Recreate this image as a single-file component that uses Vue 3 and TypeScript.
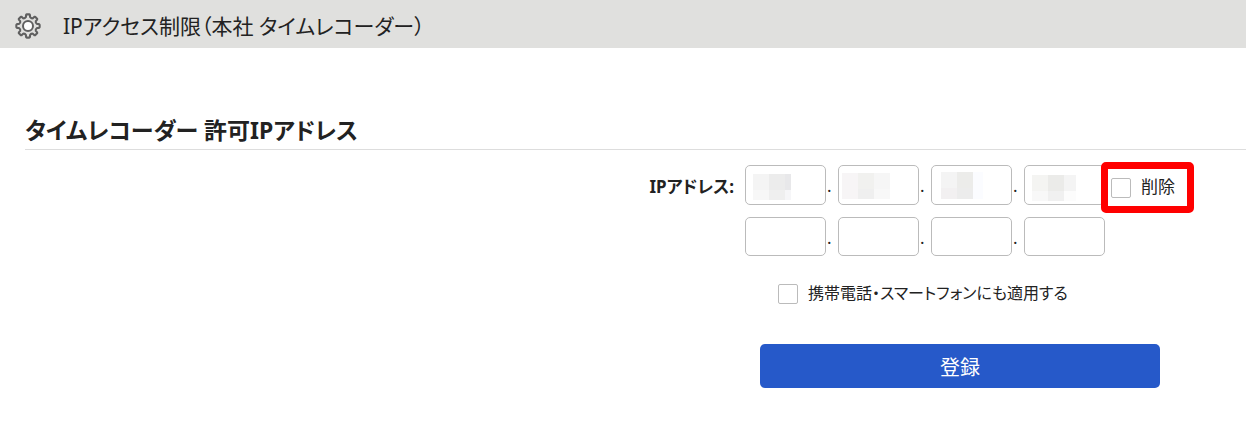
<script setup lang="ts">
import { ref } from 'vue'

interface Mosaic {
  x: number[]
  y: number[]
  fills: string[][]
}

const mosaics: Mosaic[] = [
  { x: [8, 24, 40, 46], y: [9, 25, 35], fills: [['#f4f4f4', '#ececec', '#e8e8ea'], ['#f7f7f7', '#efefef', '#f6f6f8']] },
  { x: [4, 20, 36, 52], y: [8, 24, 34], fills: [['#f7f5f6', '#f1f1ef', '#f6f6f6'], ['#f7f5f6', '#efefef', '#f8f8f8']] },
  { x: [10, 26, 42, 52], y: [7, 23, 34], fills: [['#f4f4f4', '#ececea', '#fbfcff'], ['#f2f0f1', '#ececec', '#fbfcff']] },
  { x: [8, 24, 40, 52], y: [10, 26, 36], fills: [['#f4f4f2', '#ebebe9', '#f4f4f4'], ['#f8f8f8', '#f0f0f0', '#fcfcfc']] },
]

const rows = ref<string[][]>([
  ['', '', '', ''],
  ['', '', '', ''],
])
const remove = ref(false)
const mobile = ref(false)

// Eight-toothed gear outline centred on the origin
function gearPath(): string {
  const at = (r: number, deg: number): string => {
    const a = ((deg - 90) * Math.PI) / 180
    return `${(r * Math.cos(a)).toFixed(2)} ${(r * Math.sin(a)).toFixed(2)}`
  }
  let d = `M${at(9.2, -13)}`
  for (let k = 0; k < 8; k++) {
    const c = k * 45
    d += `L${at(11.2, c - 10)}Q${at(11.7, c - 8)} ${at(11.7, c - 6)}L${at(11.7, c + 6)}Q${at(11.7, c + 8)} ${at(11.2, c + 10)}`
    d += `L${at(9.2, c + 13)}Q${at(7.9, c + 22.5)} ${at(9.2, c + 32)}`
  }
  return d + 'Z'
}
const gear = gearPath()
</script>

<template>
  <div class="page">
    <header class="bar">
      <svg class="gear" viewBox="-13 -13 26 26" aria-hidden="true">
        <path :d="gear" fill="none" stroke="#606060" stroke-width="2.1" stroke-linejoin="round" />
        <circle r="5" fill="#fff" stroke="#606060" stroke-width="2" />
      </svg>
      <h1>IPアクセス制限（本社 タイムレコーダー）</h1>
    </header>

    <main>
      <h2>タイムレコーダー 許可IPアドレス</h2>
      <form class="form" @submit.prevent>
        <label class="name" for="ip-0-0">IPアドレス:</label>
        <div class="fields">
          <div v-for="(row, r) in rows" :key="r" class="ip">
            <template v-for="(_, i) in row" :key="i">
              <span v-if="i > 0" class="dot">.</span>
              <span class="octet">
                <input :id="`ip-${r}-${i}`" v-model="row[i]" type="text" maxlength="3" :aria-label="`IPアドレス ${r + 1}-${i + 1}`" />
                <svg v-if="r === 0" class="mosaic" viewBox="0 0 81 40" shape-rendering="crispEdges" aria-hidden="true">
                  <template v-for="(line, my) in mosaics[i].fills" :key="my">
                    <rect
                      v-for="(fill, mx) in line"
                      :key="mx"
                      :x="mosaics[i].x[mx]"
                      :y="mosaics[i].y[my]"
                      :width="mosaics[i].x[mx + 1] - mosaics[i].x[mx]"
                      :height="mosaics[i].y[my + 1] - mosaics[i].y[my]"
                      :fill="fill"
                    />
                  </template>
                </svg>
              </span>
            </template>
            <label v-if="r === 0" class="check marked">
              <input v-model="remove" type="checkbox" />
              <span>削除</span>
            </label>
          </div>
          <label class="check mobile">
            <input v-model="mobile" type="checkbox" />
            <span>携帯電話・スマートフォンにも適用する</span>
          </label>
          <button type="submit">登録</button>
        </div>
      </form>
    </main>
  </div>
</template>

<style>
body {
  margin: 0;
  background: #fff;
}
</style>

<style scoped>
.page {
  color: #222;
  font-family: "Noto Sans", "Noto Sans CJK JP", sans-serif;
  font-size: 17px;
  line-height: 24px;
  font-feature-settings: "palt";
}
.bar {
  display: flex;
  align-items: center;
  gap: 22px;
  height: 48px;
  padding: 4px 15px 0;
  box-sizing: border-box;
  background: #e0e0de;
}
.gear {
  width: 26px;
  height: 26px;
  flex: none;
}
h1 {
  margin: 0;
  font-size: 21px;
  line-height: 32px;
  font-weight: 400;
}
main {
  padding: 64px 0 48px 25px;
}
h2 {
  margin: 0;
  padding-bottom: 1px;
  border-bottom: 1px solid #ddd;
  font-size: 23px;
  line-height: 36px;
  font-weight: 700;
}
.form {
  display: grid;
  grid-template-columns: 710fr 501fr;
  column-gap: 10px;
  padding-top: 15px;
}
.name {
  padding: 10px 1px 0 0;
  text-align: right;
  font-weight: 700;
}
.ip {
  display: flex;
  align-items: center;
  margin-bottom: 12px;
}
.octet {
  position: relative;
  width: 81px;
  height: 40px;
  flex: none;
}
.ip + .ip .octet {
  height: 39px;
}
.octet input {
  display: block;
  width: 100%;
  height: 100%;
  box-sizing: border-box;
  margin: 0;
  padding: 0 8px;
  border: 1px solid #bbb;
  border-radius: 5px;
  background: #fff;
  font: inherit;
  color: inherit;
}
.mosaic {
  position: absolute;
  inset: 0;
  width: 100%;
  height: 100%;
  pointer-events: none;
}
.dot {
  width: 11px;
  padding: 2px 0 0 1px;
}
.check {
  display: flex;
  align-items: center;
  gap: 10px;
}
.check input {
  appearance: none;
  flex: none;
  width: 20px;
  height: 20px;
  margin: 2px 0 0;
  border: 1px solid #bbb;
  border-radius: 2px;
  background: #fff;
}
.check input:checked {
  background: #2659c9;
}
.marked {
  position: relative;
  margin: 4px 0 0 6px;
}
.marked::after {
  content: "";
  position: absolute;
  inset: -13px -19px -14px -10px;
  border: 7px solid #f00;
  border-radius: 5px;
  pointer-events: none;
}
.mobile {
  margin: 25px 0 0 33px;
  font-size: 16px;
}
button {
  display: block;
  width: 400px;
  max-width: 90%;
  height: 44px;
  margin: 39px 0 0 15px;
  padding: 3px 0 0;
  border: 0;
  border-radius: 5px;
  background: #2659c9;
  color: #fff;
  font: inherit;
  font-size: 20px;
  line-height: 28px;
}
</style>
